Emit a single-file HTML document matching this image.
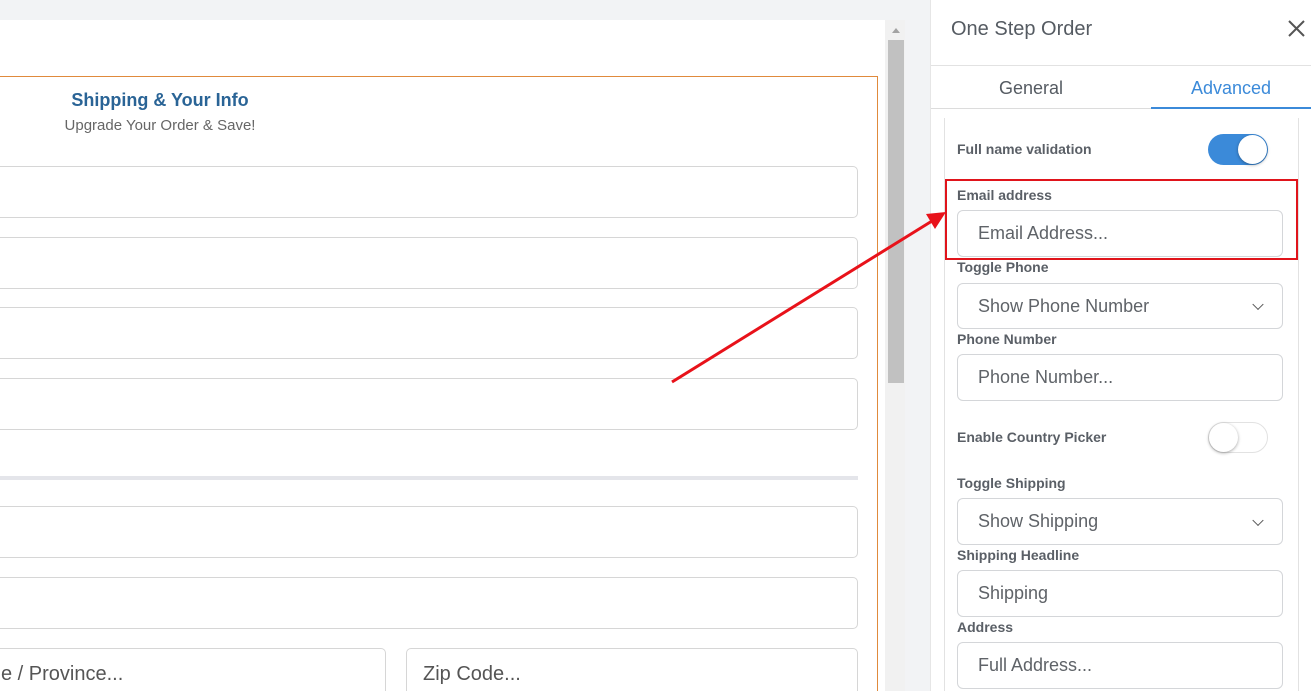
<!DOCTYPE html><html style="overflow:hidden;width:1311px;height:691px"><head><style>
body{margin:0;width:1311px;height:691px;overflow:hidden;background:#f2f3f5;font-family:"Liberation Sans",sans-serif;position:relative}
.a{position:absolute}
.in{position:absolute;border:1px solid #d6d6d6;border-radius:5px;background:#fff;box-sizing:border-box}
.lb{position:absolute;left:957px;font-size:14px;font-weight:bold;color:#5a5f66}
.f{position:absolute;left:957px;width:326px;border:1px solid #d4d6d9;border-radius:6px;box-sizing:border-box;font-size:18px;color:#5f6368;padding-left:20px;display:flex;align-items:center;background:#fff}
.tg{position:absolute;left:1208px;width:60px;height:31px;border-radius:16px;box-sizing:border-box}
.kn{position:absolute;top:1px;width:29px;height:29px;border-radius:50%;background:#fff;box-shadow:0 1px 3px rgba(0,0,0,.35)}
.chev{position:absolute;right:20px;top:50%;width:7px;height:7px;border-right:1.5px solid #555;border-bottom:1.5px solid #555;transform:translateY(-70%) rotate(45deg)}
</style></head><body>
<div class="a" style="left:0;top:20px;width:885px;height:671px;background:#fff"></div>
<div class="a" style="left:885px;top:20px;width:20px;height:671px;background:#f1f1f1"></div>
<div class="a" style="left:888px;top:40px;width:16px;height:343px;background:#c1c1c1"></div>
<div class="a" style="left:892px;top:28px;width:0;height:0;border-left:4px solid transparent;border-right:4px solid transparent;border-bottom:5px solid #a3a3a3"></div>
<div class="a" style="left:-2px;top:76px;width:880px;height:640px;border:1px solid #e08a3c;box-sizing:border-box"></div>
<div class="a" style="left:0;top:90px;width:320px;text-align:center;font-size:18px;font-weight:bold;color:#2a6496">Shipping &amp; Your Info</div>
<div class="a" style="left:0;top:117px;width:320px;text-align:center;font-size:15px;color:#666">Upgrade Your Order &amp; Save!</div>
<div class="in" style="left:-10px;top:166px;width:868px;height:52px"></div>
<div class="in" style="left:-10px;top:237px;width:868px;height:52px"></div>
<div class="in" style="left:-10px;top:307px;width:868px;height:52px"></div>
<div class="in" style="left:-10px;top:378px;width:868px;height:52px"></div>
<div class="a" style="left:0;top:476px;width:858px;height:4px;background:#e4e5ea"></div>
<div class="in" style="left:-10px;top:506px;width:868px;height:52px"></div>
<div class="in" style="left:-10px;top:577px;width:868px;height:52px"></div>
<div class="in" style="left:-10px;top:648px;width:396px;height:60px"><span class="a" style="left:10px;top:14px;font-size:20px;color:#555;white-space:nowrap">e / Province...</span></div>
<div class="in" style="left:406px;top:648px;width:452px;height:60px"><span class="a" style="left:16px;top:14px;font-size:20px;color:#555">Zip Code...</span></div>

<div class="a" style="left:930px;top:0;width:381px;height:691px;background:#fff;border-left:1px solid #e6e6e6"></div>
<div class="a" style="left:951px;top:18px;font-size:20px;color:#555b62">One Step Order</div>
<svg class="a" style="left:1288px;top:20px" width="17" height="17"><path d="M1 1L16 16M16 1L1 16" stroke="#555" stroke-width="2"/></svg>
<div class="a" style="left:931px;top:65px;width:380px;height:1px;background:#e2e2e2"></div>
<div class="a" style="left:931px;top:78px;width:200px;text-align:center;font-size:18px;color:#555b62">General</div>
<div class="a" style="left:1151px;top:78px;width:160px;text-align:center;font-size:18px;color:#3b8ad9">Advanced</div>
<div class="a" style="left:931px;top:108px;width:380px;height:1px;background:#dcdcdc"></div>
<div class="a" style="left:1151px;top:107px;width:160px;height:2px;background:#3b8ad9"></div>
<div class="a" style="left:944px;top:118px;width:353px;height:573px;border-left:1px solid #e2e2e2;border-right:1px solid #e2e2e2"></div>

<div class="lb" style="top:141px">Full name validation</div>
<div class="tg" style="top:134px;background:#3b8ad9"><div class="kn" style="left:30px"></div></div>
<div class="lb" style="top:187px">Email address</div>
<div class="f" style="top:210px;height:47px">Email Address...</div>
<div class="lb" style="top:259px">Toggle Phone</div>
<div class="f" style="top:283px;height:46px">Show Phone Number<div class="chev"></div></div>
<div class="lb" style="top:331px">Phone Number</div>
<div class="f" style="top:354px;height:47px">Phone Number...</div>
<div class="lb" style="top:429px">Enable Country Picker</div>
<div class="tg" style="top:422px;border:1px solid #e2e2e2"><div class="kn" style="left:0;top:0"></div></div>
<div class="lb" style="top:475px">Toggle Shipping</div>
<div class="f" style="top:498px;height:47px">Show Shipping<div class="chev"></div></div>
<div class="lb" style="top:547px">Shipping Headline</div>
<div class="f" style="top:570px;height:47px">Shipping</div>
<div class="lb" style="top:619px">Address</div>
<div class="f" style="top:642px;height:47px">Full Address...</div>

<div class="a" style="left:945px;top:179px;width:353px;height:81px;border:2px solid #e0141b;box-sizing:border-box"></div>
<svg class="a" style="left:0;top:0" width="1311" height="691"><line x1="672" y1="382" x2="932" y2="221" stroke="#e8121a" stroke-width="3"/><polygon points="946,212 926,214 935,229" fill="#e8121a"/></svg>
</body></html>
